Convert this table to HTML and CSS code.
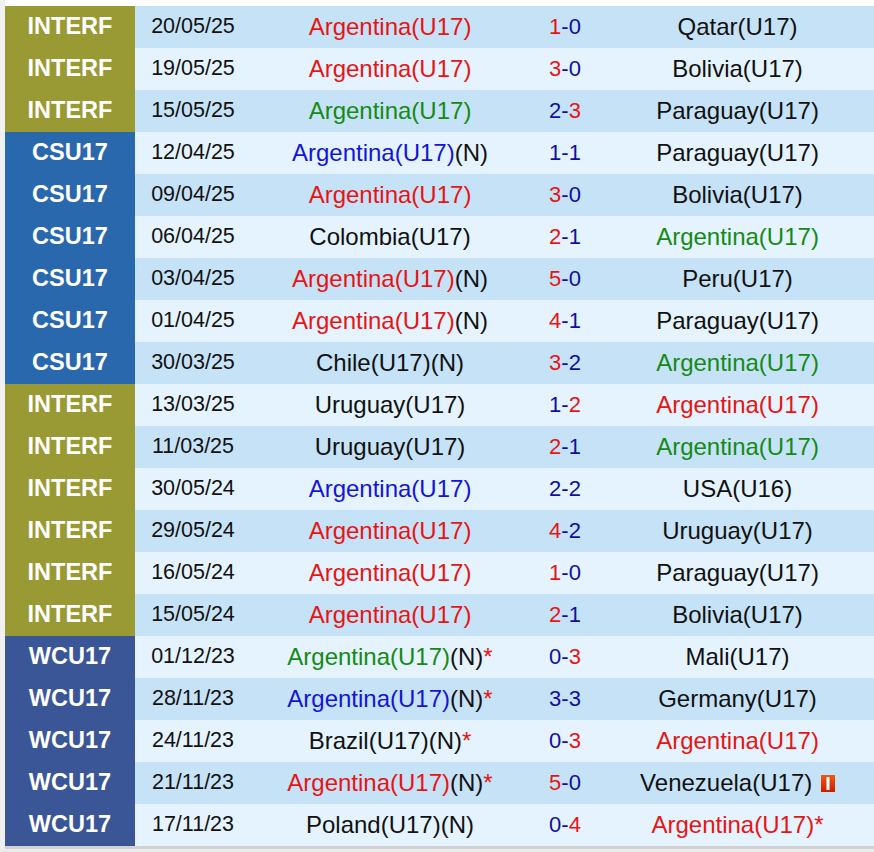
FILE: index.html
```html
<!DOCTYPE html>
<html>
<head>
<meta charset="utf-8">
<link rel="stylesheet" href="styles.css">
</head>
<body>
<div class="wrap">
<table class="results">
<tbody>
<tr class="odd"><td class="comp interf">INTERF</td><td class="date">20/05/25</td><td class="team"><span class="red">Argentina(U17)</span></td><td class="score"><span class="red">1</span>-0</td><td class="team">Qatar(U17)</td></tr>
<tr class="even"><td class="comp interf">INTERF</td><td class="date">19/05/25</td><td class="team"><span class="red">Argentina(U17)</span></td><td class="score"><span class="red">3</span>-0</td><td class="team">Bolivia(U17)</td></tr>
<tr class="odd"><td class="comp interf">INTERF</td><td class="date">15/05/25</td><td class="team"><span class="green">Argentina(U17)</span></td><td class="score">2-<span class="red">3</span></td><td class="team">Paraguay(U17)</td></tr>
<tr class="even"><td class="comp csu">CSU17</td><td class="date">12/04/25</td><td class="team"><span class="blue">Argentina(U17)</span>(N)</td><td class="score">1-1</td><td class="team">Paraguay(U17)</td></tr>
<tr class="odd"><td class="comp csu">CSU17</td><td class="date">09/04/25</td><td class="team"><span class="red">Argentina(U17)</span></td><td class="score"><span class="red">3</span>-0</td><td class="team">Bolivia(U17)</td></tr>
<tr class="even"><td class="comp csu">CSU17</td><td class="date">06/04/25</td><td class="team">Colombia(U17)</td><td class="score"><span class="red">2</span>-1</td><td class="team"><span class="green">Argentina(U17)</span></td></tr>
<tr class="odd"><td class="comp csu">CSU17</td><td class="date">03/04/25</td><td class="team"><span class="red">Argentina(U17)</span>(N)</td><td class="score"><span class="red">5</span>-0</td><td class="team">Peru(U17)</td></tr>
<tr class="even"><td class="comp csu">CSU17</td><td class="date">01/04/25</td><td class="team"><span class="red">Argentina(U17)</span>(N)</td><td class="score"><span class="red">4</span>-1</td><td class="team">Paraguay(U17)</td></tr>
<tr class="odd"><td class="comp csu">CSU17</td><td class="date">30/03/25</td><td class="team">Chile(U17)(N)</td><td class="score"><span class="red">3</span>-2</td><td class="team"><span class="green">Argentina(U17)</span></td></tr>
<tr class="even"><td class="comp interf">INTERF</td><td class="date">13/03/25</td><td class="team">Uruguay(U17)</td><td class="score">1-<span class="red">2</span></td><td class="team"><span class="red">Argentina(U17)</span></td></tr>
<tr class="odd"><td class="comp interf">INTERF</td><td class="date">11/03/25</td><td class="team">Uruguay(U17)</td><td class="score"><span class="red">2</span>-1</td><td class="team"><span class="green">Argentina(U17)</span></td></tr>
<tr class="even"><td class="comp interf">INTERF</td><td class="date">30/05/24</td><td class="team"><span class="blue">Argentina(U17)</span></td><td class="score">2-2</td><td class="team">USA(U16)</td></tr>
<tr class="odd"><td class="comp interf">INTERF</td><td class="date">29/05/24</td><td class="team"><span class="red">Argentina(U17)</span></td><td class="score"><span class="red">4</span>-2</td><td class="team">Uruguay(U17)</td></tr>
<tr class="even"><td class="comp interf">INTERF</td><td class="date">16/05/24</td><td class="team"><span class="red">Argentina(U17)</span></td><td class="score"><span class="red">1</span>-0</td><td class="team">Paraguay(U17)</td></tr>
<tr class="odd"><td class="comp interf">INTERF</td><td class="date">15/05/24</td><td class="team"><span class="red">Argentina(U17)</span></td><td class="score"><span class="red">2</span>-1</td><td class="team">Bolivia(U17)</td></tr>
<tr class="even"><td class="comp wcu">WCU17</td><td class="date">01/12/23</td><td class="team"><span class="green">Argentina(U17)</span>(N)<span class="red">*</span></td><td class="score">0-<span class="red">3</span></td><td class="team">Mali(U17)</td></tr>
<tr class="odd"><td class="comp wcu">WCU17</td><td class="date">28/11/23</td><td class="team"><span class="blue">Argentina(U17)</span>(N)<span class="red">*</span></td><td class="score">3-3</td><td class="team">Germany(U17)</td></tr>
<tr class="even"><td class="comp wcu">WCU17</td><td class="date">24/11/23</td><td class="team">Brazil(U17)(N)<span class="red">*</span></td><td class="score">0-<span class="red">3</span></td><td class="team"><span class="red">Argentina(U17)</span></td></tr>
<tr class="odd"><td class="comp wcu">WCU17</td><td class="date">21/11/23</td><td class="team"><span class="red">Argentina(U17)</span>(N)<span class="red">*</span></td><td class="score"><span class="red">5</span>-0</td><td class="team">Venezuela(U17) <span class="flag"><svg width="14" height="17" viewBox="0 0 14 17"><defs><linearGradient id="fg" x1="0" y1="0" x2="0" y2="1"><stop offset="0" stop-color="#f05a14"/><stop offset="1" stop-color="#c81e00"/></linearGradient></defs><rect width="14" height="17" fill="url(#fg)"/><rect x="5.5" y="2" width="3" height="13" fill="#fff"/></svg></span></td></tr>
<tr class="even"><td class="comp wcu">WCU17</td><td class="date">17/11/23</td><td class="team">Poland(U17)(N)</td><td class="score">0-<span class="red">4</span></td><td class="team"><span class="red">Argentina(U17)*</span></td></tr>
</tbody>
</table>
</div>
</body>
</html>
```

FILE: styles.css
```css
html {
  background: #ececec;
}
body {
  margin: 0;
  padding: 6px 0 0 0;
  background: #ffffff;
  border-left: 5px solid #f0f0f0;
  font-family: "Liberation Sans", Arial, sans-serif;
  color: #111;
}
.wrap {
  border-bottom: 3px solid #d2d2d2;
}
.results {
  border-collapse: collapse;
  width: 869px;
  table-layout: fixed;
}
.results td {
  height: 42px;
  padding: 0 0 1px 0;
  box-sizing: border-box;
  text-align: center;
  white-space: nowrap;
  vertical-align: middle;
}
.odd td { background: #c6e2f6; }
.even td { background: #e4f3fd; }
.results td.comp {
  width: 130px;
  color: #fff;
  font-weight: bold;
  font-size: 23.5px;
}
.results td.interf { background: #999a33; }
.results td.csu { background: #2a68ae; }
.results td.wcu { background: #3a5696; }
.date {
  width: 116px;
  font-size: 21.5px;
  color: #111;
}
.team {
  font-size: 24px;
}
.results td:nth-child(3) { width: 278px; }
.results td:nth-child(4) { width: 72px; }
.score {
  font-size: 22px;
  color: #1010a0;
}
.red { color: #e81414; }
.green { color: #158a15; }
.blue { color: #1414d8; }
.flag {
  display: inline-block;
  vertical-align: -1px;
  margin-left: 2px;
}
.flag svg { display: block; }
```
